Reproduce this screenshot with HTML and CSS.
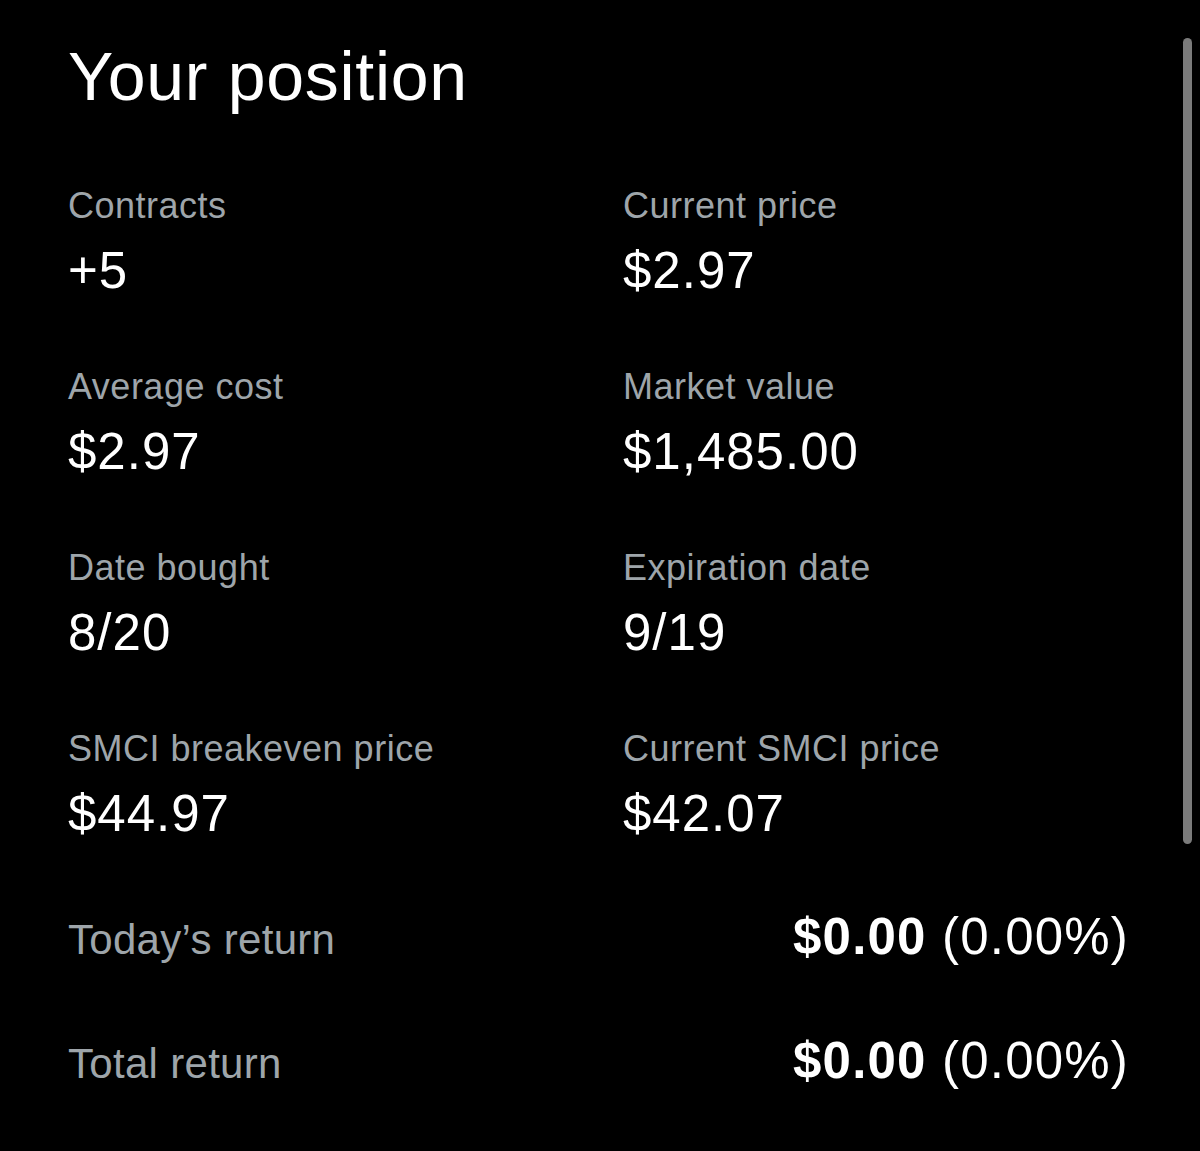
FILE: index.html
```html
<!DOCTYPE html>
<html lang="en">
<head>
<meta charset="utf-8">
<title>Your position</title>
<link rel="stylesheet" href="styles.css">
</head>
<body>
<main class="panel">
  <h1 class="title">Your position</h1>
  <section class="grid">
    <div class="stat">
      <div class="label">Contracts</div>
      <div class="value">+5</div>
    </div>
    <div class="stat">
      <div class="label">Current price</div>
      <div class="value">$2.97</div>
    </div>
    <div class="stat">
      <div class="label">Average cost</div>
      <div class="value">$2.97</div>
    </div>
    <div class="stat">
      <div class="label">Market value</div>
      <div class="value">$1,485.00</div>
    </div>
    <div class="stat">
      <div class="label">Date bought</div>
      <div class="value">8/20</div>
    </div>
    <div class="stat">
      <div class="label">Expiration date</div>
      <div class="value">9/19</div>
    </div>
    <div class="stat">
      <div class="label">SMCI breakeven price</div>
      <div class="value">$44.97</div>
    </div>
    <div class="stat">
      <div class="label">Current SMCI price</div>
      <div class="value">$42.07</div>
    </div>
  </section>
  <section class="returns">
    <div class="ret-row">
      <span class="ret-label">Today’s return</span>
      <span class="ret-value"><b>$0.00</b> (0.00%)</span>
    </div>
    <div class="ret-row">
      <span class="ret-label">Total return</span>
      <span class="ret-value"><b>$0.00</b> (0.00%)</span>
    </div>
  </section>
</main>
<div class="scrollbar"></div>
</body>
</html>
```

FILE: styles.css
```css
html, body {
  margin: 0;
  padding: 0;
  background: #000;
}
body {
  font-family: "Liberation Sans", Arial, sans-serif;
  color: #fff;
  min-height: 1151px;
}
.panel {
  padding: 42px 71px 0 68px;
}
.title {
  margin: 0;
  font-size: 68px;
  line-height: 68px;
  font-weight: 400;
  color: #fff;
  letter-spacing: 0.7px;
}
.grid {
  margin-top: 78px;
  display: grid;
  grid-template-columns: 555px 1fr;
  row-gap: 72px;
}
.stat {
  display: flex;
  flex-direction: column;
  gap: 21px;
}
.label {
  font-size: 36px;
  line-height: 36px;
  color: #9ea5aa;
  letter-spacing: 0.5px;
}
.value {
  font-size: 51px;
  line-height: 52px;
  color: #fff;
  letter-spacing: 1px;
}
.returns {
  margin-top: 71px;
  display: flex;
  flex-direction: column;
  gap: 72px;
}
.ret-row {
  display: flex;
  justify-content: space-between;
  align-items: baseline;
  height: 52px;
}
.ret-label {
  font-size: 42px;
  color: #9ea5aa;
  letter-spacing: 0.3px;
}
.ret-value {
  font-size: 51px;
  line-height: 52px;
  color: #fff;
  letter-spacing: 1.2px;
}
.ret-value b {
  font-weight: 700;
}
.scrollbar {
  position: absolute;
  left: 1183px;
  top: 38px;
  width: 9px;
  height: 806px;
  border-radius: 5px;
  background: #7b7b7b;
}
```
